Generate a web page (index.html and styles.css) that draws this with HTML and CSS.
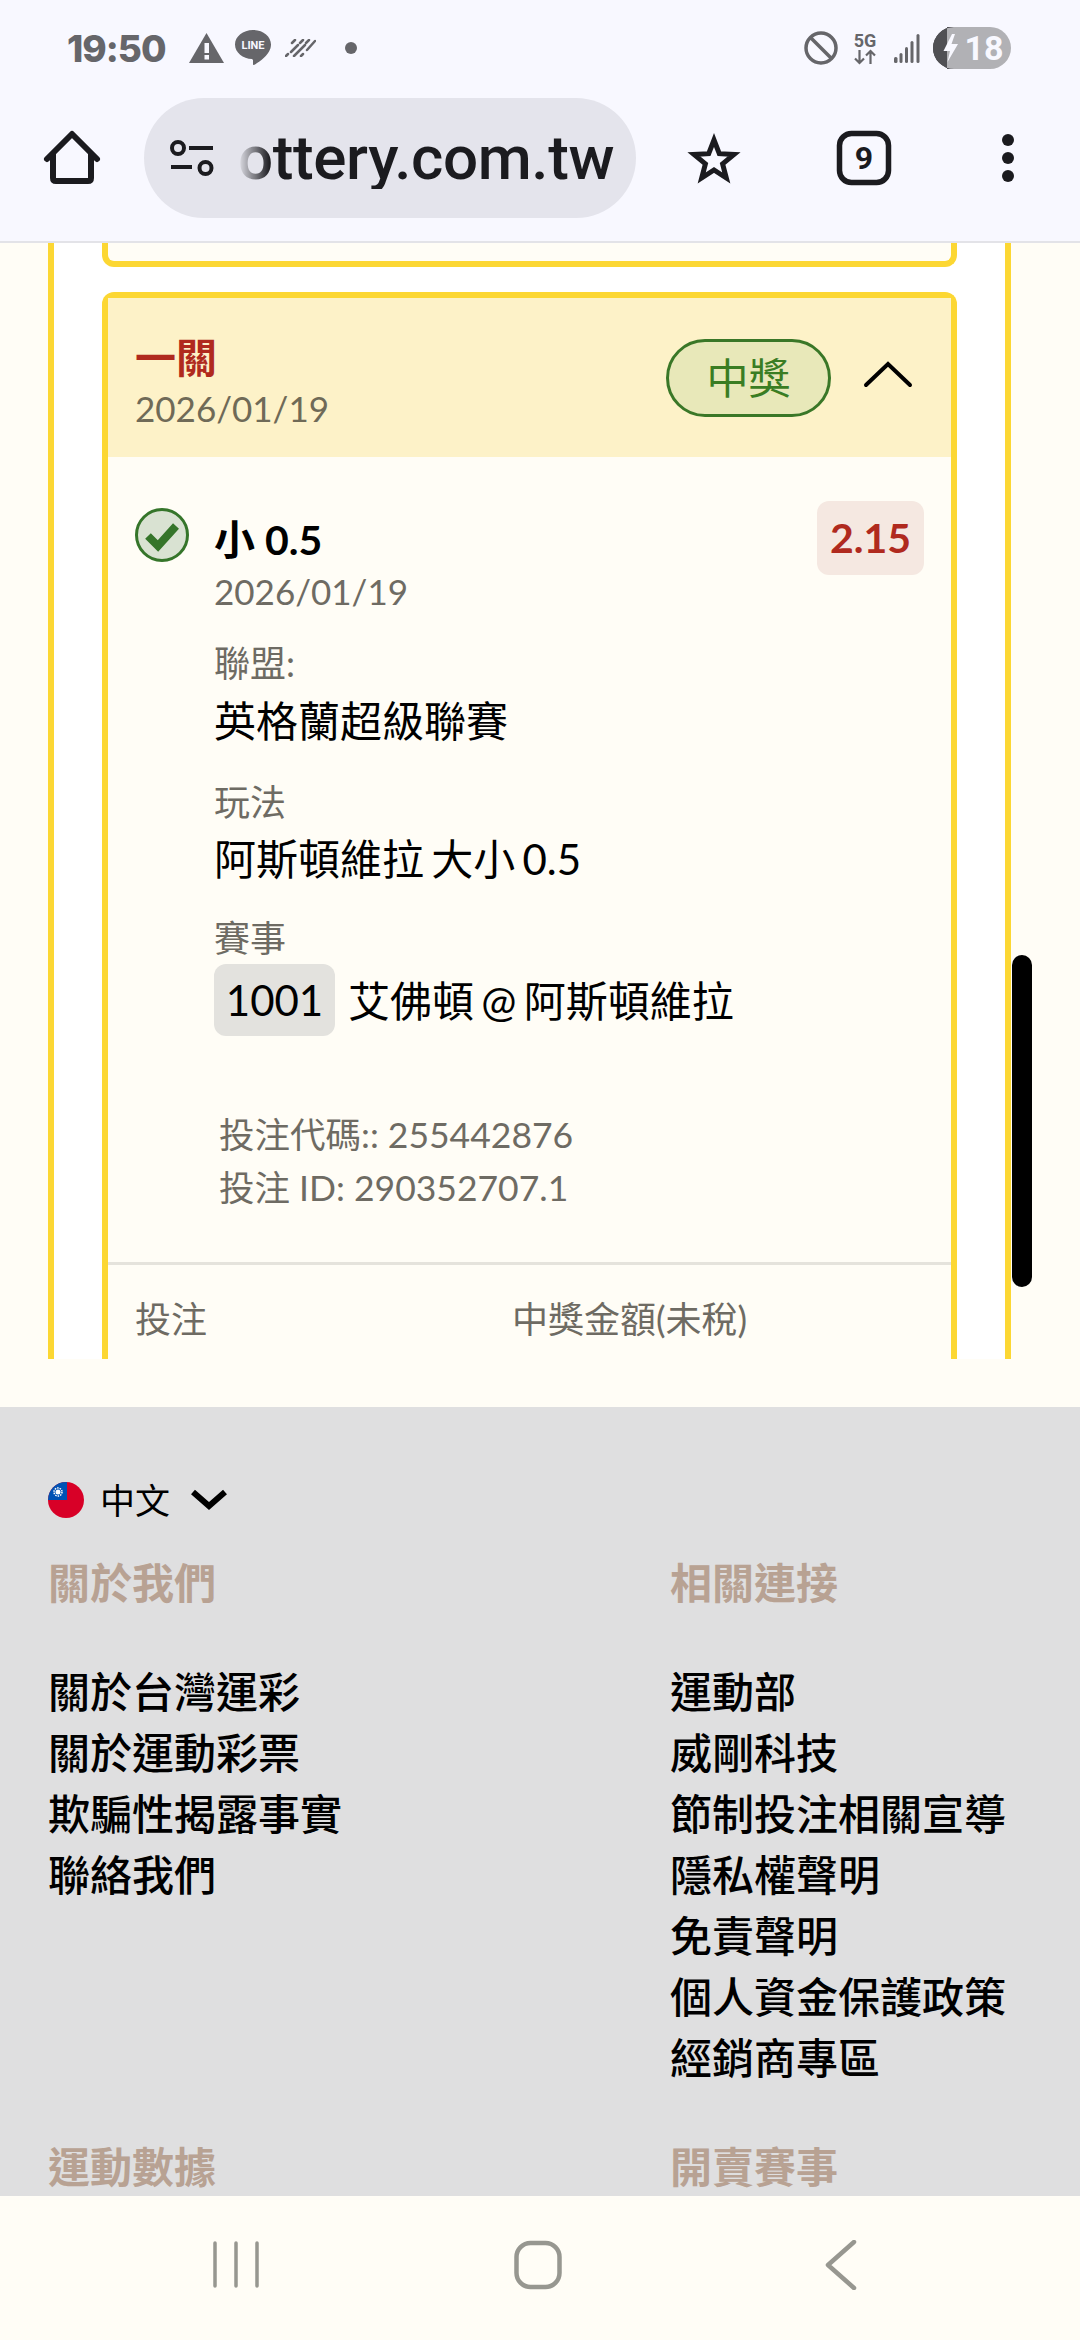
FILE: index.html
```html
<!DOCTYPE html>
<html lang="zh-Hant">
<head>
<meta charset="utf-8">
<title>台灣運彩</title>
<link rel="stylesheet" href="styles.css">
</head>
<body>
<div class="screen">
  <header class="topbar">
    <div class="status">
      <span class="time">19:50</span>
      <svg class="s-tri" width="35" height="30" viewBox="0 0 35 30"><path d="M17.5 0 35 30H0z" fill="#66666a"/><rect x="15.5" y="10" width="4.5" height="10" fill="#f8f8ff"/><rect x="15.5" y="22" width="4.5" height="4.5" fill="#f8f8ff"/></svg>
      <svg class="s-line" width="36" height="36" viewBox="0 0 36 36"><path d="M18 0C8 0 0 6.500 0 14.500S8 29 17 29l1 1v4c0 1 .8 1.500 2 .6 4-2.800 16-10 16-20.100C36 6.500 28 0 18 0z" fill="#66666a"/><text x="18" y="19" class="line-txt">LINE</text></svg>
      <svg class="s-stripes" width="31" height="18" viewBox="0 0 31 18"><g stroke="#66666a" stroke-width="2.500" stroke-linecap="round" fill="none"><path d="M1 17 3 15M6 13 13 6M10 1 7 4"/><path d="M9 17 20 6M18 1 15 4"/><path d="M16 17 18 15M22 11 30 2"/><path d="M24 1 21 4"/></g></svg>
      <span class="s-dot"></span>
      <div class="status-right">
        <svg width="34" height="34" viewBox="0 0 34 34"><circle cx="17" cy="17" r="15" fill="none" stroke="#66666a" stroke-width="3.500"/><path d="M6.500 6.500 27.500 27.500" stroke="#66666a" stroke-width="3.500"/></svg>
        <svg class="s-5g" width="24" height="39" viewBox="0 -3 24 39"><text x="12" y="15" class="fiveg">5G</text><path d="M6.500 18V31M2 26.500l4.500 4.500 4.500-4.500M17.500 32V19M13 23.500l4.500-4.500 4.500 4.500" fill="none" stroke="#66666a" stroke-width="2.200"/></svg>
        <svg class="s-signal" width="26" height="29" viewBox="0 0 26 29"><g fill="#66666a"><rect x="0" y="23" width="3.500" height="6" rx="1.500"/><rect x="5.500" y="19" width="3" height="10" rx="1.500"/><rect x="11" y="13" width="3" height="16" rx="1.500"/><rect x="16.500" y="7" width="3" height="22" rx="1.500"/><rect x="22.500" y="0" width="3" height="29" rx="1.500"/></g></svg>
        <svg class="s-batt" width="78" height="42" viewBox="0 0 78 42"><rect width="78" height="42" rx="21" fill="#b1b1b5"/><path d="M14 0V42H21A21 21 0 0 1 21 0z" fill="#505054"/><path d="M21 0A21 21 0 0 0 21 42H14V0z" fill="#505054"/><path d="M19 7 10.500 24H17L14.500 35 25 17H18.500L22 7z" fill="#f8f8ff"/><text x="51" y="33" class="batt-txt">18</text></svg>
      </div>
    </div>
    <div class="toolbar">
      <svg width="60" height="60" viewBox="0 0 60 60"><path d="M5 31 30 6 55 31M11 26V50Q11 53 14 53H46Q49 53 49 50V26" fill="none" stroke="#1b1b1f" stroke-width="6" stroke-linecap="round" stroke-linejoin="round"/></svg>
      <div class="urlbar">
        <svg class="tune" width="44" height="37" viewBox="0 0 44 37"><g fill="none" stroke="#1b1b1f" stroke-width="4"><circle cx="8" cy="8" r="6"/><path d="M19 8H43M1 27H22"/><circle cx="35.500" cy="28" r="6"/></g></svg>
        <span class="url">ottery.com.tw</span>
      </div>
      <svg class="tb-star" width="60" height="60" viewBox="0 0 60 60"><path d="M30 12 35.300 25.700 50 26.500 38.600 35.800 42.300 50 30 42 17.700 50 21.400 35.800 10 26.500 24.700 25.700z" fill="none" stroke="#1b1b1f" stroke-width="5"/></svg>
      <svg class="tb-tab" width="60" height="60" viewBox="0 0 60 60"><rect x="5.500" y="5.500" width="49" height="49" rx="12" fill="none" stroke="#1b1b1f" stroke-width="5.500"/><text x="30" y="41" class="tab-txt">9</text></svg>
      <svg class="tb-more" width="60" height="60" viewBox="0 0 60 60"><g fill="#1b1b1f"><circle cx="30" cy="12" r="6"/><circle cx="30" cy="30" r="6"/><circle cx="30" cy="48" r="6"/></g></svg>
    </div>
  </header>

  <main class="main">
    <div class="outer">
      <div class="card-prev"></div>
      <section class="card">
        <div class="card-head">
          <div class="head-text">
            <div class="head-title">一關</div>
            <div class="head-date">2026/01/19</div>
          </div>
          <span class="pill">中獎</span>
          <svg class="chev-up" width="50" height="40" viewBox="0 0 50 40"><path d="M3 27 25 6 47 27" fill="none" stroke="#000" stroke-width="4" stroke-linecap="round"/></svg>
        </div>
        <div class="pick">
          <svg class="check" width="54" height="54" viewBox="0 0 54 54"><circle cx="27" cy="27" r="25.500" fill="#d9e2d2" stroke="#35752a" stroke-width="3"/><path d="M13 28 23 38 41 18" fill="none" stroke="#35752a" stroke-width="8" stroke-linejoin="miter"/></svg>
          <div class="pick-text">
            <div class="pick-title">小 0.5</div>
            <div class="pick-date">2026/01/19</div>
            <div class="label label-first">聯盟:</div>
            <div class="value value-a">英格蘭超級聯賽</div>
            <div class="label label-b">玩法</div>
            <div class="value value-b">阿斯頓維拉 大小 0.5</div>
            <div class="label label-c">賽事</div>
            <div class="match">
              <span class="tag">1001</span>
              <span class="match-name">艾佛頓 @ 阿斯頓維拉</span>
            </div>
          </div>
          <span class="odds">2.15</span>
        </div>
        <div class="ids">
          <div>投注代碼:: 255442876</div>
          <div>投注 ID: 290352707.1</div>
        </div>
        <div class="stake">
          <span>投注</span>
          <span>中獎金額(未稅)</span>
        </div>
      </section>
    </div>
  </main>

  <footer class="footer">
    <div class="lang">
      <svg width="36" height="36" viewBox="0 0 36 36"><defs><clipPath id="flagclip"><circle cx="18" cy="18" r="18"/></clipPath></defs><g clip-path="url(#flagclip)"><rect width="36" height="36" fill="#d80027"/><rect width="19" height="18" fill="#0052b4"/><circle cx="10" cy="10" r="4" fill="none" stroke="#fff" stroke-width="1.500" stroke-dasharray="1.500 1"/><circle cx="10" cy="10" r="2.500" fill="#fff"/></g></svg>
      <span class="lang-name">中文</span>
      <svg class="lang-chev" width="36" height="22" viewBox="0 0 36 22"><path d="M2 3 18 17 34 3" fill="none" stroke="#000" stroke-width="6"/></svg>
    </div>
    <div class="links">
      <div>
        <h2 class="f-head">關於我們</h2>
        <ul class="f-list">
          <li>關於台灣運彩</li>
          <li>關於運動彩票</li>
          <li>欺騙性揭露事實</li>
          <li>聯絡我們</li>
        </ul>
      </div>
      <div>
        <h2 class="f-head">相關連接</h2>
        <ul class="f-list">
          <li>運動部</li>
          <li>威剛科技</li>
          <li>節制投注相關宣導</li>
          <li>隱私權聲明</li>
          <li>免責聲明</li>
          <li>個人資金保護政策</li>
          <li>經銷商專區</li>
        </ul>
      </div>
      <h2 class="f-head">運動數據</h2>
      <h2 class="f-head">開賣賽事</h2>
    </div>
  </footer>

  <nav class="navbar">
    <svg width="60" height="50" viewBox="0 0 60 50"><g stroke="#979790" stroke-width="3.500" stroke-linecap="round"><path d="M9 3V46M30 3V46M51 3V46"/></g></svg>
    <svg width="60" height="50" viewBox="0 0 60 50"><rect x="8.500" y="3" width="43" height="44" rx="14" fill="none" stroke="#979790" stroke-width="4.500"/></svg>
    <svg width="60" height="50" viewBox="0 0 60 50"><path d="M44 2 18 25 44 48" fill="none" stroke="#979790" stroke-width="4.500" stroke-linecap="round" stroke-linejoin="round"/></svg>
  </nav>

  <div class="scrollbar"></div>
</div>
</body>
</html>
```

FILE: styles.css
```css
* { box-sizing: border-box; }
html, body { margin: 0; padding: 0; }
body { background: #fffdf6; font-family: "Lato", "Noto Sans CJK TC", sans-serif; }
.screen { position: relative; width: 1080px; height: 2340px; overflow: hidden; display: flex; flex-direction: column; }

.topbar { height: 243px; flex: none; background: #f8f8ff; border-bottom: 2px solid #e3e3e8; }
.status { height: 96px; display: flex; align-items: center; padding: 0 69px 0 67px; }
.time { width: 102px; font: 800 37px/1 "Inter", sans-serif; letter-spacing: -1px; color: #66666a; white-space: nowrap; }
.s-tri { margin-left: 20px; }
.s-line { margin-left: 11px; }
.s-stripes { margin-left: 14px; }
.s-dot { margin-left: 29px; width: 12px; height: 12px; border-radius: 50%; background: #66666a; }
.status-right { margin-left: auto; display: flex; align-items: center; }
.s-5g { margin-left: 15px; }
.s-signal { margin-left: 17px; }
.s-batt { margin-left: 13px; }
.line-txt { font: 700 11px "Roboto", sans-serif; fill: #f8f8ff; text-anchor: middle; }
.fiveg { font: 700 18px "Roboto", sans-serif; fill: #66666a; text-anchor: middle; }
.batt-txt { font: 700 34px "Roboto", sans-serif; fill: #f8f8ff; text-anchor: middle; }

.toolbar { height: 124px; display: flex; align-items: center; padding: 0 0 0 42px; }
.urlbar { margin-left: 42px; width: 492px; height: 120px; border-radius: 60px; background: #e4e4ec; display: flex; align-items: center; padding-left: 26px; overflow: hidden; }
.tune { flex: none; }
.url { margin-left: 24px; font: 500 62px/1 "Roboto", sans-serif; letter-spacing: -0.4px; color: #1b1b1f; white-space: nowrap; -webkit-mask-image: linear-gradient(90deg, transparent 0, #000 32px); mask-image: linear-gradient(90deg, transparent 0, #000 32px); }
.tb-star { margin-left: 48px; }
.tb-tab { margin-left: 90px; }
.tb-more { margin-left: 84px; }
.tab-txt { font: 700 32px "Roboto", sans-serif; fill: #1b1b1f; text-anchor: middle; }

.main { height: 1164px; flex: none; padding: 0 69px 48px 48px; background: #fffdf6; }
.outer { height: 1116px; overflow: hidden; background: #fff; border-left: 6px solid #fcd733; border-right: 6px solid #fcd733; padding: 0 48px; }
.card-prev { height: 24px; border: 6px solid #fcd733; border-top: 0; border-radius: 0 0 12px 12px; background: #fffdf6; }
.card { margin-top: 25px; border: 6px solid #fcd733; border-bottom: 0; border-radius: 12px 12px 0 0; background: #fffdf6; }
.card-head { height: 159px; background: #fdf2c8; display: flex; align-items: center; padding: 0 38px 0 27px; }
.head-text { margin-top: 6px; margin-right: auto; }
.head-title { font-size: 41px; line-height: 56px; font-weight: 700; color: #b02a1e; }
.head-date { font-size: 35px; line-height: 45px; color: #6f6a57; }
.pill { width: 165px; height: 78px; border: 3px solid #3a7727; border-radius: 39px; background: #e8e8b9; color: #3a7d23; font-size: 42px; line-height: 72px; text-align: center; }
.chev-up { margin-left: 32px; }

.pick { display: flex; align-items: flex-start; padding: 44px 27px 0 27px; }
.check { flex: none; margin-top: 7px; }
.pick-text { flex: 1; margin-left: 25px; padding-top: 14px; }
.pick-title { font-size: 41px; line-height: 50px; font-weight: 700; color: #000; }
.pick-date { font-size: 35px; line-height: 52px; color: #6e6b63; }
.label { font-size: 36px; line-height: 44px; color: #6e6b63; }
.label-first { margin-top: 24px; }
.label-b { margin-top: 23px; }
.label-c { margin-top: 22px; }
.value { font-size: 42px; color: #000; word-spacing: -3.5px; }
.value-a { line-height: 72px; }
.value-b { line-height: 70px; }
.match { display: flex; align-items: center; margin-top: 2px; }
.tag { width: 121px; height: 72px; border-radius: 12px; background: #e3e2de; font-size: 42px; line-height: 72px; text-align: center; color: #000; }
.match-name { margin-left: 13px; font-size: 42px; line-height: 72px; padding-top: 3px; color: #000; word-spacing: -3.5px; }
.odds { flex: none; width: 107px; height: 74px; border-radius: 12px; background: #f5e8e1; color: #b02a1e; font-size: 41px; font-weight: 700; line-height: 74px; text-align: center; }

.ids { margin-top: 71px; padding-left: 111px; font-size: 35.5px; line-height: 53px; color: #6e6b63; }
.stake { margin-top: 48px; border-top: 3px solid #e5e3dc; padding: 30px 0 60px 27px; display: grid; grid-template-columns: 377px 1fr; font-size: 36px; line-height: 48px; color: #6e6b63; }

.footer { height: 789px; flex: none; background: #dfdfe0; padding: 68px 0 0 48px; overflow: hidden; }
.lang { height: 50px; display: flex; align-items: center; }
.lang-name { margin-left: 16px; font-size: 35px; line-height: 50px; color: #000; }
.lang-chev { margin-left: 21px; }
.links { margin-top: 28px; display: grid; grid-template-columns: 622px 1fr; row-gap: 48px; }
.f-head { margin: 0; font-size: 42px; line-height: 60px; font-weight: 700; color: #b8a293; }
.f-list { list-style: none; margin: 49px 0 0; padding: 0; font-size: 42px; line-height: 61px; font-weight: 500; color: #000; }

.navbar { height: 144px; flex: none; background: #fffdf6; display: flex; align-items: flex-start; gap: 242px; padding: 44px 0 0 206px; }

.scrollbar { position: absolute; left: 1012px; top: 955px; width: 20px; height: 332px; border-radius: 10px; background: #000; }
```
